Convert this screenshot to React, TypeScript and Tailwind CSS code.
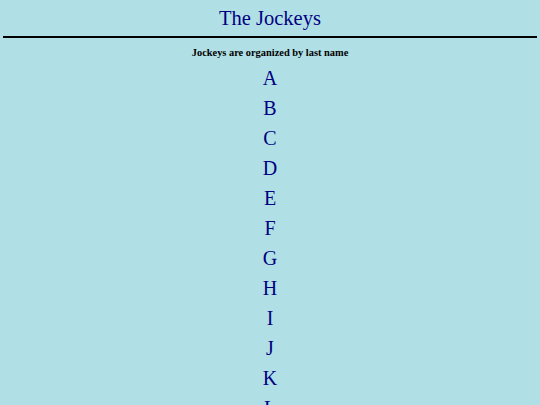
export default function App() {
  const letters = ["A", "B", "C", "D", "E", "F", "G", "H", "I", "J", "K", "L", "M", "N", "O", "P", "Q", "R", "S", "T", "U", "V", "W", "X", "Y", "Z"];
  return (
    <div
      className="min-h-screen bg-[#b0e0e6] text-center"
      style={{ fontFamily: '"Liberation Serif", "Times New Roman", serif' }}
    >
      <h1 className="pt-[6px] text-[20.5px] leading-[24px] text-[#000080]">The Jockeys</h1>
      <div className="mx-[3px] mt-[6px] h-[2px] bg-black" />
      <h5 className="mt-[8px] text-[10.4px] font-bold leading-[13px] text-black">
        Jockeys are organized by last name
      </h5>
      <ul className="mt-[4px]">
        {letters.map((l) => (
          <li key={l} className="h-[30px] text-[20px] leading-[30px] text-[#000080]">
            {l}
          </li>
        ))}
      </ul>
    </div>
  );
}
